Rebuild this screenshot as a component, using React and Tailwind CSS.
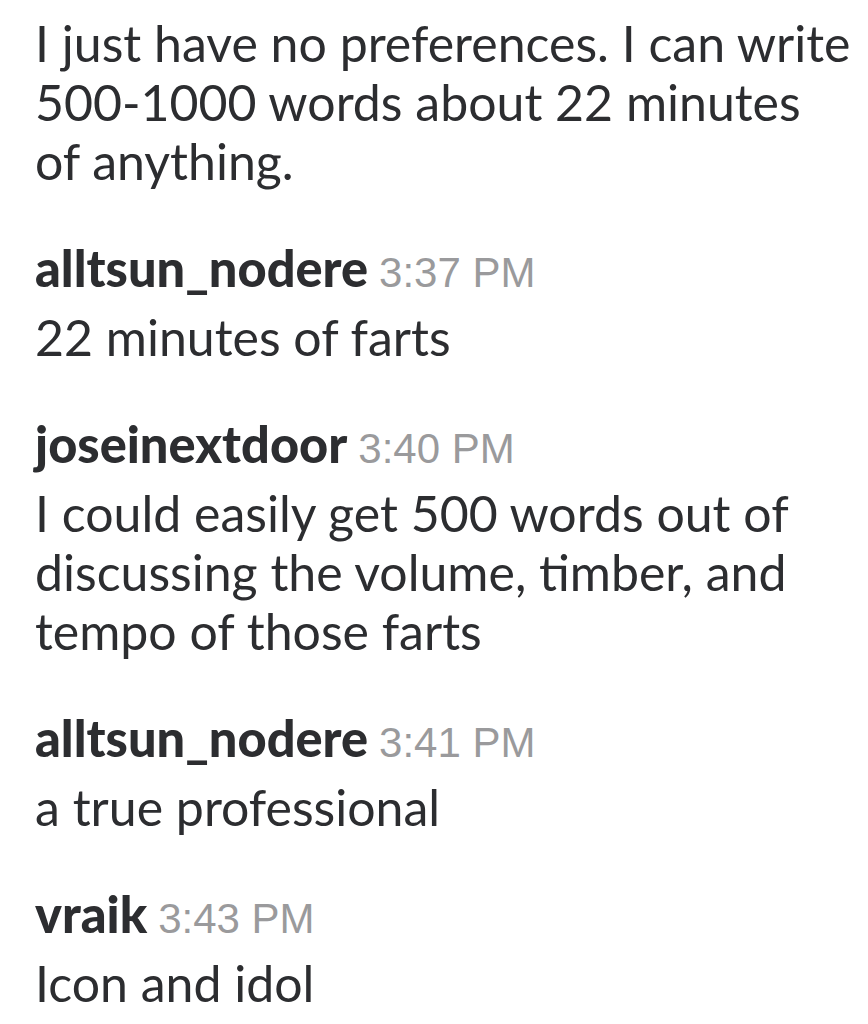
const messages = [
  { name: null, time: null, lines: ['I just have no preferences. I can write', '500-1000 words about 22 minutes', 'of anything.'] },
  { name: 'alltsun_nodere', time: '3:37 PM', lines: ['22 minutes of farts'] },
  { name: 'joseinextdoor', time: '3:40 PM', lines: ['I could easily get 500 words out of', 'discussing the volume, timber, and', 'tempo of those farts'] },
  { name: 'alltsun_nodere', time: '3:41 PM', lines: ['a true professional'] },
  { name: 'vraik', time: '3:43 PM', lines: ['Icon and idol'] },
];

export default function App() {
  return (
    <div className="min-h-screen bg-white pl-[35px] pt-[14px] text-[#2c2d30]" style={{ fontFamily: 'Lato, "Noto Sans", sans-serif' }}>
      <div className="flex flex-col gap-[47px]">
        {messages.map((m, i) => (
          <div key={i}>
            {m.name && (
              <div className="flex items-baseline gap-[11px] h-[60px] leading-[60px] mb-[10px]">
                <span className="text-[50.5px] font-black">{m.name}</span>
                <span className="text-[42px] text-[#9a9a9c]" style={{ fontFamily: '"Liberation Sans", Arial, sans-serif' }}>{m.time}</span>
              </div>
            )}
            <div className="text-[50px] leading-[59px]">
              {m.lines.map((l, j) => (
                <div key={j} className="whitespace-nowrap">{l}</div>
              ))}
            </div>
          </div>
        ))}
      </div>
    </div>
  );
}
